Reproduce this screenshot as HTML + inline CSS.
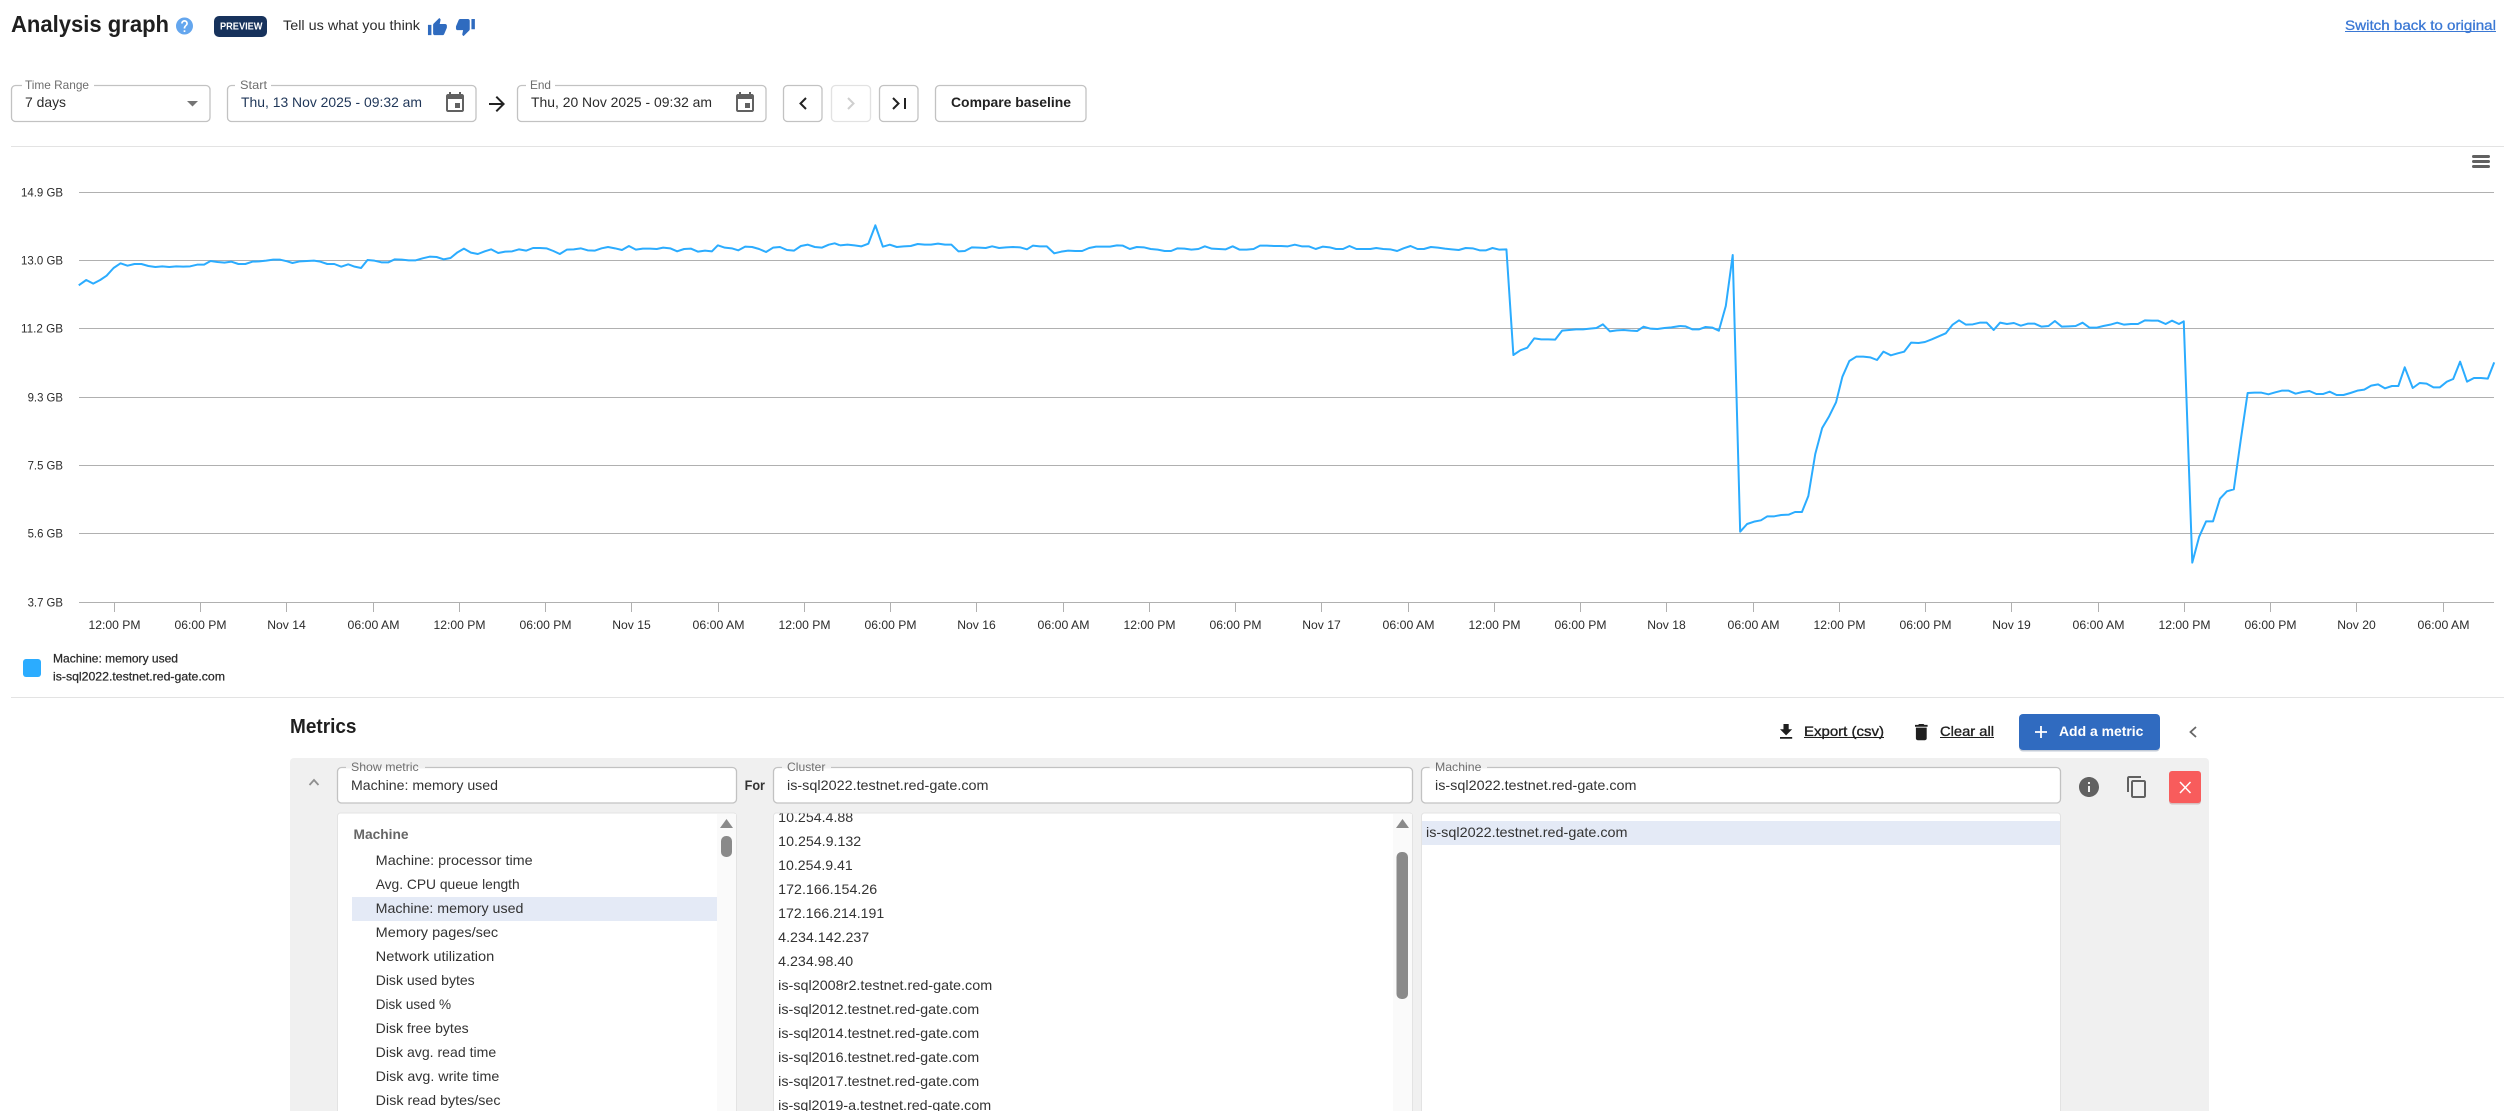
<!DOCTYPE html>
<html lang="en"><head><meta charset="utf-8"><title>Analysis graph</title>
<style>
html,body{margin:0;padding:0;background:#fff;width:2515px;height:1111px;overflow:hidden}
svg{display:block;font-family:"Liberation Sans",Arial,sans-serif}
text{white-space:pre}
.t{font-size:14px;fill:#2b2b2b}
.b{font-size:14px;font-weight:700;fill:#222}
.l{font-size:12px;fill:#6e6e6e}
.a{font-size:12px;fill:#2b2b2b}
.m{font-size:14px;fill:#333}
.md{font-size:14px;fill:#1f1f1f;stroke:#1f1f1f;stroke-width:.35px}
.g{stroke:#b0b0b0;stroke-width:1;fill:none}
.i{fill:#616161}
.box{fill:#fff;stroke:#c2c2c2;stroke-width:1.3}
.ln{fill:none;stroke:#2bacff;stroke-width:2;stroke-linejoin:round;vector-effect:non-scaling-stroke}
</style></head><body>
<svg width="2515" height="1111" viewBox="0 0 2515 1111" xmlns="http://www.w3.org/2000/svg">
<rect width="2515" height="1111" fill="#fff"/>

<!-- Header -->
<text x="11" y="32" font-size="23" font-weight="700" fill="#1f1f1f" textLength="158" lengthAdjust="spacingAndGlyphs">Analysis graph</text>
<path transform="translate(174.3,15.8) scale(.85)" fill="#64a6ee" d="M12 2C6.48 2 2 6.48 2 12s4.48 10 10 10 10-4.48 10-10S17.52 2 12 2zm1 17h-2v-2h2v2zm2.07-7.75l-.9.92C13.45 12.9 13 13.5 13 15h-2v-.5c0-1.1.45-2.1 1.17-2.83l1.24-1.26c.37-.36.59-.86.59-1.41 0-1.1-.9-2-2-2s-2 .9-2 2H8c0-2.21 1.79-4 4-4s4 1.79 4 4c0 .88-.36 1.68-.93 2.25z"/>
<rect x="214" y="16" width="53" height="21" rx="5" fill="#17325c"/>
<text x="220" y="29.5" font-size="10" font-weight="700" fill="#fff" textLength="42.5" lengthAdjust="spacingAndGlyphs">PREVIEW</text>
<text class="t" x="283" y="30" textLength="137" lengthAdjust="spacingAndGlyphs">Tell us what you think</text>
<path transform="translate(427.1,17.1) scale(.86)" fill="#2f6bbf" d="M1 21h4V9H1v12zm22-11c0-1.1-.9-2-2-2h-6.31l.95-4.57.03-.32c0-.41-.17-.79-.44-1.06L14.17 1 7.59 7.59C7.22 7.95 7 8.45 7 9v10c0 1.1.9 2 2 2h9c.83 0 1.54-.5 1.84-1.22l3.02-7.05c.09-.23.14-.47.14-.73v-2z"/>
<path transform="translate(455.1,16.4) scale(.86)" fill="#2f6bbf" d="M15 3H6c-.83 0-1.54.5-1.84 1.22l-3.02 7.05c-.09.23-.14.47-.14.73v2c0 1.1.9 2 2 2h6.31l-.95 4.57-.03.32c0 .41.17.79.44 1.06L9.83 23l6.59-6.59c.36-.36.58-.86.58-1.41V5c0-1.1-.9-2-2-2zm4 0v12h4V3h-4z"/>
<text x="2345" y="30" font-size="14" fill="#3b78d4" stroke="#3b78d4" stroke-width=".3" textLength="151" lengthAdjust="spacingAndGlyphs">Switch back to original</text>
<rect x="2345" y="31" width="151" height="1" fill="#3b78d4"/>

<!-- Controls -->
<rect class="box" x="11.5" y="85.5" width="198.5" height="36" rx="4"/>
<rect x="22" y="84" width="72" height="3" fill="#fff"/>
<text class="l" x="25" y="89" textLength="64" lengthAdjust="spacingAndGlyphs">Time Range</text>
<text class="t" x="25" y="107" textLength="41" lengthAdjust="spacingAndGlyphs">7 days</text>
<polygon points="187,101 198,101 192.5,106.5" fill="#757575"/>

<rect class="box" x="227.5" y="85.5" width="248.5" height="36" rx="4"/>
<rect x="235" y="84" width="36" height="3" fill="#fff"/>
<text class="l" x="240" y="89" textLength="27" lengthAdjust="spacingAndGlyphs">Start</text>
<text class="t" x="241" y="107" style="fill:#1f3658" textLength="181" lengthAdjust="spacingAndGlyphs">Thu, 13 Nov 2025 - 09:32 am</text>
<path class="i" transform="translate(443,91)" d="M17 12h-5v5h5v-5zM16 1v2H8V1H6v2H5c-1.11 0-1.99.9-1.99 2L3 19c0 1.1.89 2 2 2h14c1.1 0 2-.9 2-2V5c0-1.1-.9-2-2-2h-1V1h-2zm3 18H5V8h14v11z"/>

<path transform="translate(485,92)" fill="#222" d="M12 4l-1.41 1.41L16.17 11H4v2h12.17l-5.58 5.59L12 20l8-8z"/>

<rect class="box" x="517.5" y="85.5" width="248.5" height="36" rx="4"/>
<rect x="526" y="84" width="29" height="3" fill="#fff"/>
<text class="l" x="530" y="89" textLength="21" lengthAdjust="spacingAndGlyphs">End</text>
<text class="t" x="531" y="107" textLength="181" lengthAdjust="spacingAndGlyphs">Thu, 20 Nov 2025 - 09:32 am</text>
<path class="i" transform="translate(733,91)" d="M17 12h-5v5h5v-5zM16 1v2H8V1H6v2H5c-1.11 0-1.99.9-1.99 2L3 19c0 1.1.89 2 2 2h14c1.1 0 2-.9 2-2V5c0-1.1-.9-2-2-2h-1V1h-2zm3 18H5V8h14v11z"/>

<rect class="box" x="783.5" y="85.5" width="38.5" height="36" rx="4"/>
<path d="M806 98l-5.500 5.500 5.500 5.500" fill="none" stroke="#222" stroke-width="2"/>
<rect x="831.500" y="85.500" width="39" height="36" rx="4" fill="#fff" stroke="#e2e2e2" stroke-width="1.300"/>
<path d="M848 98l5.500 5.500-5.500 5.500" fill="none" stroke="#cfcfcf" stroke-width="2"/>
<rect class="box" x="879.500" y="85.500" width="38.500" height="36" rx="4"/>
<path d="M893 98l5.500 5.500-5.500 5.500" fill="none" stroke="#222" stroke-width="2"/>
<rect x="904" y="98" width="2" height="11" fill="#222"/>
<rect class="box" x="935.500" y="85.500" width="150.500" height="36" rx="4"/>
<text class="b" x="951" y="107" textLength="120" lengthAdjust="spacingAndGlyphs">Compare baseline</text>

<rect x="11" y="146" width="2493" height="1" fill="#e3e3e3"/>

<!-- Chart -->
<rect x="2472" y="155" width="18" height="3" rx="1.500" fill="#616161"/>
<rect x="2472" y="160" width="18" height="3" rx="1.500" fill="#616161"/>
<rect x="2472" y="165" width="18" height="3" rx="1.500" fill="#616161"/>
<g class="g">
<path d="M79 192.500H2494M79 260.500H2494M79 328.500H2494M79 397.500H2494M79 465.500H2494M79 533.500H2494M79 602.500H2494"/>
<path d="M114.500 603v9M200.500 603v9M286.500 603v9M373.500 603v9M459.500 603v9M545.500 603v9M631.500 603v9M718.500 603v9M804.500 603v9M890.500 603v9M976.500 603v9M1063.500 603v9M1149.500 603v9M1235.500 603v9M1321.500 603v9M1408.500 603v9M1494.500 603v9M1580.500 603v9M1666.500 603v9M1753.500 603v9M1839.500 603v9M1925.500 603v9M2011.500 603v9M2098.500 603v9M2184.500 603v9M2270.500 603v9M2356.500 603v9M2443.500 603v9"/>
</g>
<g class="a" text-anchor="end">
<text x="63" y="196.500" textLength="42" lengthAdjust="spacingAndGlyphs">14.9 GB</text>
<text x="63" y="264.500" textLength="42" lengthAdjust="spacingAndGlyphs">13.0 GB</text>
<text x="63" y="332.500" textLength="42" lengthAdjust="spacingAndGlyphs">11.2 GB</text>
<text x="63" y="401.500" textLength="35.400" lengthAdjust="spacingAndGlyphs">9.3 GB</text>
<text x="63" y="469.500" textLength="35.400" lengthAdjust="spacingAndGlyphs">7.5 GB</text>
<text x="63" y="537.500" textLength="35.400" lengthAdjust="spacingAndGlyphs">5.6 GB</text>
<text x="63" y="606.500" textLength="35.400" lengthAdjust="spacingAndGlyphs">3.7 GB</text>
</g>
<g class="a" text-anchor="middle">
<text x="114.500" y="629" textLength="52" lengthAdjust="spacingAndGlyphs">12:00 PM</text>
<text x="200.500" y="629" textLength="52" lengthAdjust="spacingAndGlyphs">06:00 PM</text>
<text x="286.500" y="629" textLength="38.500" lengthAdjust="spacingAndGlyphs">Nov 14</text>
<text x="373.500" y="629" textLength="52" lengthAdjust="spacingAndGlyphs">06:00 AM</text>
<text x="459.500" y="629" textLength="52" lengthAdjust="spacingAndGlyphs">12:00 PM</text>
<text x="545.500" y="629" textLength="52" lengthAdjust="spacingAndGlyphs">06:00 PM</text>
<text x="631.500" y="629" textLength="38.500" lengthAdjust="spacingAndGlyphs">Nov 15</text>
<text x="718.500" y="629" textLength="52" lengthAdjust="spacingAndGlyphs">06:00 AM</text>
<text x="804.500" y="629" textLength="52" lengthAdjust="spacingAndGlyphs">12:00 PM</text>
<text x="890.500" y="629" textLength="52" lengthAdjust="spacingAndGlyphs">06:00 PM</text>
<text x="976.500" y="629" textLength="38.500" lengthAdjust="spacingAndGlyphs">Nov 16</text>
<text x="1063.500" y="629" textLength="52" lengthAdjust="spacingAndGlyphs">06:00 AM</text>
<text x="1149.500" y="629" textLength="52" lengthAdjust="spacingAndGlyphs">12:00 PM</text>
<text x="1235.500" y="629" textLength="52" lengthAdjust="spacingAndGlyphs">06:00 PM</text>
<text x="1321.500" y="629" textLength="38.500" lengthAdjust="spacingAndGlyphs">Nov 17</text>
<text x="1408.500" y="629" textLength="52" lengthAdjust="spacingAndGlyphs">06:00 AM</text>
<text x="1494.500" y="629" textLength="52" lengthAdjust="spacingAndGlyphs">12:00 PM</text>
<text x="1580.500" y="629" textLength="52" lengthAdjust="spacingAndGlyphs">06:00 PM</text>
<text x="1666.500" y="629" textLength="38.500" lengthAdjust="spacingAndGlyphs">Nov 18</text>
<text x="1753.500" y="629" textLength="52" lengthAdjust="spacingAndGlyphs">06:00 AM</text>
<text x="1839.500" y="629" textLength="52" lengthAdjust="spacingAndGlyphs">12:00 PM</text>
<text x="1925.500" y="629" textLength="52" lengthAdjust="spacingAndGlyphs">06:00 PM</text>
<text x="2011.500" y="629" textLength="38.500" lengthAdjust="spacingAndGlyphs">Nov 19</text>
<text x="2098.500" y="629" textLength="52" lengthAdjust="spacingAndGlyphs">06:00 AM</text>
<text x="2184.500" y="629" textLength="52" lengthAdjust="spacingAndGlyphs">12:00 PM</text>
<text x="2270.500" y="629" textLength="52" lengthAdjust="spacingAndGlyphs">06:00 PM</text>
<text x="2356.500" y="629" textLength="38.500" lengthAdjust="spacingAndGlyphs">Nov 20</text>
<text x="2443.500" y="629" textLength="52" lengthAdjust="spacingAndGlyphs">06:00 AM</text>
</g>

<polyline class="ln" transform="translate(0,140) scale(.53571,.33333)" points="147,436 161,420 174,431 187,420 199,407 212,384 225,370 238,377 251,372 264,372 277,378 290,381 303,379 316,381 329,379 342,380 355,379 368,374 381,374 393,363 406,366 419,368 432,365 445,372 458,372 471,365 484,364 497,362 510,359 523,359 536,364 546,369 560,364 573,363 586,362 598,365 611,372 624,372 637,380 650,373 662,380 674,384 686,360 699,362 712,367 725,367 737,358 750,359 763,361 776,361 789,355 802,350 815,351 828,358 841,354 854,337 866,326 879,338 892,342 905,334 917,328 930,339 943,335 956,334 969,328 982,332 995,324 1008,324 1020,325 1033,333 1045,342 1058,329 1071,328 1084,325 1097,331 1110,332 1123,325 1135,321 1148,325 1161,330 1174,318 1187,329 1200,326 1213,326 1226,327 1238,323 1251,325 1264,334 1277,327 1290,326 1303,335 1316,332 1329,334 1340,316 1353,323 1366,325 1378,331 1391,320 1404,321 1417,327 1430,336 1443,323 1456,321 1469,330 1482,332 1495,318 1508,314 1521,321 1534,323 1547,314 1558,310 1568,316"/>
<polyline class="ln" transform="translate(840,140) scale(.53571,.33333)" points="0,316 14,314 27,316 40,319 53,311 66,256 80,320 93,314 106,321 119,319 132,318 145,312 158,314 170,314 183,311 196,314 208,314 221,334 233,333 246,322 259,323 272,324 284,319 297,324 310,322 323,321 336,322 349,328 360,317 373,319 386,319 400,340 413,335 426,332 439,333 452,333 465,324 478,320 491,320 504,320 517,316 528,317 541,327 554,321 567,322 580,327 593,329 606,333 618,333 630,325 643,326 656,329 669,327 681,319 694,326 707,327 720,328 733,319 746,329 759,329 772,327 784,317 797,317 810,318 823,318 836,319 849,314 862,319 875,319 888,327 901,320 914,322 926,327 939,327 951,318 964,327 977,327 990,327 1001,324 1014,327 1027,328 1040,333 1052,325 1065,318 1078,327 1090,327 1103,321 1116,323 1129,326 1142,328 1155,330 1168,324 1181,325 1194,331 1206,331 1218,324 1231,329 1244,328 1257,645 1270,631 1283,623 1296,595 1309,598 1322,598 1335,599 1348,572 1361,570 1374,568 1387,568 1400,566 1412,564 1424,553 1437,574 1450,571 1463,570 1476,572 1488,573 1500,560 1513,566 1526,567 1539,564 1552,562 1568,558"/>
<polyline class="ln" transform="translate(1680,200) scale(.53251,.33333)" points="0,378 10,379 23,388 36,388 48,381 61,383 73,392 86,318 99,165 113,995 126,972 139,965 152,961 164,949 177,949 190,945 204,944 216,936 229,936 241,888 254,762 267,684 280,649 293,607 305,530 318,483 331,470 344,470 357,472 370,480 382,455 396,466 409,460 421,455 434,428 448,429 460,426 473,418 486,409 499,400 512,374 524,361 537,374 550,373 563,368 576,368 589,390 601,368 614,372 627,369 640,377 653,371 666,371 679,380 692,378 704,363 717,380 730,379 743,378 756,368 769,383 782,383 795,378 808,374 821,368 834,374 847,372 860,372 873,361 886,362 898,362 912,372 924,362 937,372 946,364 962,1088 975,1010 988,964 1001,964 1014,896 1027,874 1040,868 1053,720 1066,579 1079,578 1092,578 1105,583 1118,577 1130,572 1143,572 1156,581 1169,576 1182,573 1195,582 1208,582 1220,575 1233,585 1246,585 1259,579 1272,572 1285,569 1298,557 1311,553 1324,565 1337,558 1349,558 1361,502 1376,564 1389,549 1402,551 1415,562 1427,562 1440,545 1452,537 1465,485 1478,545 1491,534 1504,534 1517,536 1529,487"/>

<!-- Legend -->
<rect x="23" y="659" width="18" height="18" rx="3" fill="#2bacff"/>
<text class="a" x="53" y="662.500" stroke="#2b2b2b" stroke-width=".25" textLength="125" lengthAdjust="spacingAndGlyphs">Machine: memory used</text>
<text class="a" x="53" y="680.500" stroke="#2b2b2b" stroke-width=".25" textLength="172" lengthAdjust="spacingAndGlyphs">is-sql2022.testnet.red-gate.com</text>
<rect x="11" y="697" width="2493" height="1" fill="#e3e3e3"/>

<!-- Metrics header -->
<text x="290" y="733" font-size="20" font-weight="700" fill="#1f1f1f" textLength="66.500" lengthAdjust="spacingAndGlyphs">Metrics</text>
<path transform="translate(1775.650,721.400) scale(.87)" fill="#1f1f1f" d="M19 9h-4V3H9v6H5l7 7 7-7zM5 18v2h14v-2H5z"/>
<text class="md" x="1804" y="736" textLength="80" lengthAdjust="spacingAndGlyphs">Export (csv)</text>
<rect x="1804" y="737" width="80" height="1" fill="#1f1f1f"/>
<path transform="translate(1910.500,721.300) scale(.9)" fill="#1f1f1f" d="M6 19c0 1.100.9 2 2 2h8c1.100 0 2-.9 2-2V7H6v12zM19 4h-3.500l-1-1h-5l-1 1H5v2h14V4z"/>
<text class="md" x="1940" y="736" textLength="54" lengthAdjust="spacingAndGlyphs">Clear all</text>
<rect x="1940" y="737" width="54" height="1" fill="#1f1f1f"/>
<rect x="2019" y="714" width="141" height="36" rx="4" fill="#9ba9bd" transform="translate(0,1.500)" opacity=".6"/>
<rect x="2019" y="714" width="141" height="36" rx="4" fill="#306bc0"/>
<path d="M2035 732h12M2041 726v12" stroke="#fff" stroke-width="1.800" fill="none"/>
<text x="2059" y="736" font-size="14" font-weight="700" fill="#fff" textLength="84.400" lengthAdjust="spacingAndGlyphs">Add a metric</text>
<path d="M2196 727l-5.500 5 5.500 5" fill="none" stroke="#666" stroke-width="1.800"/>

<!-- Panel -->
<path d="M290 1111V762a4 4 0 0 1 4-4H2205a4 4 0 0 1 4 4V1111z" fill="#f0f0f0"/>
<path d="M309.500 785l4.500-5 4.500 5" fill="none" stroke="#8f8f8f" stroke-width="1.800"/>

<rect class="box" x="337.500" y="767.500" width="399" height="35.500" rx="4"/>
<rect x="346" y="766" width="79" height="2.500" fill="#f0f0f0"/>
<text class="l" x="351" y="771" textLength="67.700" lengthAdjust="spacingAndGlyphs">Show metric</text>
<text class="m" x="351" y="790" textLength="147" lengthAdjust="spacingAndGlyphs">Machine: memory used</text>

<text class="b" x="744.600" y="790" textLength="20.400" lengthAdjust="spacingAndGlyphs" style="fill:#333">For</text>

<rect class="box" x="773.500" y="767.500" width="639" height="35.500" rx="4"/>
<rect x="782" y="766" width="49" height="2.500" fill="#f0f0f0"/>
<text class="l" x="787" y="771" textLength="38.400" lengthAdjust="spacingAndGlyphs">Cluster</text>
<text class="m" x="787" y="790" textLength="201.500" lengthAdjust="spacingAndGlyphs">is-sql2022.testnet.red-gate.com</text>

<rect class="box" x="1421.500" y="767.500" width="639" height="35.500" rx="4"/>
<rect x="1429.600" y="766" width="57.400" height="2.500" fill="#f0f0f0"/>
<text class="l" x="1435" y="771" textLength="46.400" lengthAdjust="spacingAndGlyphs">Machine</text>
<text class="m" x="1435" y="790" textLength="201.500" lengthAdjust="spacingAndGlyphs">is-sql2022.testnet.red-gate.com</text>

<path class="i" transform="translate(2077,775)" d="M12 2C6.480 2 2 6.480 2 12s4.480 10 10 10 10-4.480 10-10S17.520 2 12 2zm1 15h-2v-6h2v6zm0-8h-2V7h2v2z"/>
<path class="i" transform="translate(2125,775)" d="M16 1H4c-1.100 0-2 .9-2 2v14h2V3h12V1zm3 4H8c-1.100 0-2 .9-2 2v14c0 1.100.9 2 2 2h11c1.100 0 2-.9 2-2V7c0-1.100-.9-2-2-2zm0 16H8V7h11v14z"/>
<rect x="2169" y="772.500" width="32" height="32" rx="3" fill="#c9a9a9" opacity=".7"/>
<rect x="2169" y="771" width="32" height="32" rx="3" fill="#f85c5c"/>
<path d="M2180 782l10.500 11M2190.500 782l-10.500 11" stroke="#fff" stroke-width="1.500" fill="none"/>

<!-- Metric list -->
<rect x="337.500" y="813" width="399" height="310" rx="3" fill="#fff" stroke="#e3e3e3"/>
<rect x="717" y="814" width="19" height="300" fill="#fafafa"/>
<polygon points="720,828 733,828 726.500,819" fill="#8a8a8a"/>
<rect x="721" y="836" width="11" height="21" rx="5" fill="#8a8a8a"/>
<rect x="352" y="897" width="365" height="24" fill="#e4eaf6"/>
<text x="353.500" y="839" font-size="14" font-weight="700" fill="#666" textLength="55" lengthAdjust="spacingAndGlyphs">Machine</text>
<g class="m">
<text x="375.700" y="865" textLength="157" lengthAdjust="spacingAndGlyphs">Machine: processor time</text>
<text x="375.700" y="889" textLength="144" lengthAdjust="spacingAndGlyphs">Avg. CPU queue length</text>
<text x="375.700" y="913" textLength="147.700" lengthAdjust="spacingAndGlyphs">Machine: memory used</text>
<text x="375.700" y="937" textLength="122.500" lengthAdjust="spacingAndGlyphs">Memory pages/sec</text>
<text x="375.700" y="961" textLength="118.600" lengthAdjust="spacingAndGlyphs">Network utilization</text>
<text x="375.700" y="985" textLength="99" lengthAdjust="spacingAndGlyphs">Disk used bytes</text>
<text x="375.700" y="1009" textLength="75.400" lengthAdjust="spacingAndGlyphs">Disk used %</text>
<text x="375.700" y="1033" textLength="93" lengthAdjust="spacingAndGlyphs">Disk free bytes</text>
<text x="375.700" y="1057" textLength="120.500" lengthAdjust="spacingAndGlyphs">Disk avg. read time</text>
<text x="375.700" y="1081" textLength="123.600" lengthAdjust="spacingAndGlyphs">Disk avg. write time</text>
<text x="375.700" y="1105" textLength="124.800" lengthAdjust="spacingAndGlyphs">Disk read bytes/sec</text>
</g>

<!-- Cluster list -->
<rect x="773.500" y="813" width="639" height="310" rx="3" fill="#fff" stroke="#e3e3e3"/>
<rect x="1393" y="814" width="19" height="300" fill="#fafafa"/>
<polygon points="1396,828 1409,828 1402.500,819" fill="#8a8a8a"/>
<rect x="1396.500" y="852" width="11.500" height="147" rx="5" fill="#8a8a8a"/>
<g class="m">
<text x="778.200" y="822" textLength="75" lengthAdjust="spacingAndGlyphs">10.254.4.88</text>
<text x="778.200" y="846" textLength="83" lengthAdjust="spacingAndGlyphs">10.254.9.132</text>
<text x="778.200" y="870" textLength="74.500" lengthAdjust="spacingAndGlyphs">10.254.9.41</text>
<text x="778.200" y="894" textLength="99" lengthAdjust="spacingAndGlyphs">172.166.154.26</text>
<text x="778.200" y="918" textLength="106" lengthAdjust="spacingAndGlyphs">172.166.214.191</text>
<text x="778.200" y="942" textLength="91" lengthAdjust="spacingAndGlyphs">4.234.142.237</text>
<text x="778.200" y="966" textLength="75" lengthAdjust="spacingAndGlyphs">4.234.98.40</text>
<text x="778.200" y="990" textLength="214" lengthAdjust="spacingAndGlyphs">is-sql2008r2.testnet.red-gate.com</text>
<text x="778.200" y="1014" textLength="201" lengthAdjust="spacingAndGlyphs">is-sql2012.testnet.red-gate.com</text>
<text x="778.200" y="1038" textLength="201" lengthAdjust="spacingAndGlyphs">is-sql2014.testnet.red-gate.com</text>
<text x="778.200" y="1062" textLength="201" lengthAdjust="spacingAndGlyphs">is-sql2016.testnet.red-gate.com</text>
<text x="778.200" y="1086" textLength="201" lengthAdjust="spacingAndGlyphs">is-sql2017.testnet.red-gate.com</text>
<text x="778.200" y="1110" textLength="213" lengthAdjust="spacingAndGlyphs">is-sql2019-a.testnet.red-gate.com</text>
</g>
<rect x="773" y="806" width="640" height="6.500" fill="#f0f0f0"/>
<rect x="775" y="812.500" width="636" height="1" fill="#e3e3e3"/>

<!-- Machine list -->
<rect x="1421.500" y="813" width="639" height="310" rx="3" fill="#fff" stroke="#e3e3e3"/>
<rect x="1422" y="821" width="638" height="24" fill="#e4eaf6"/>
<text class="m" x="1426" y="837" textLength="201.500" lengthAdjust="spacingAndGlyphs">is-sql2022.testnet.red-gate.com</text>
</svg>
</body></html>
